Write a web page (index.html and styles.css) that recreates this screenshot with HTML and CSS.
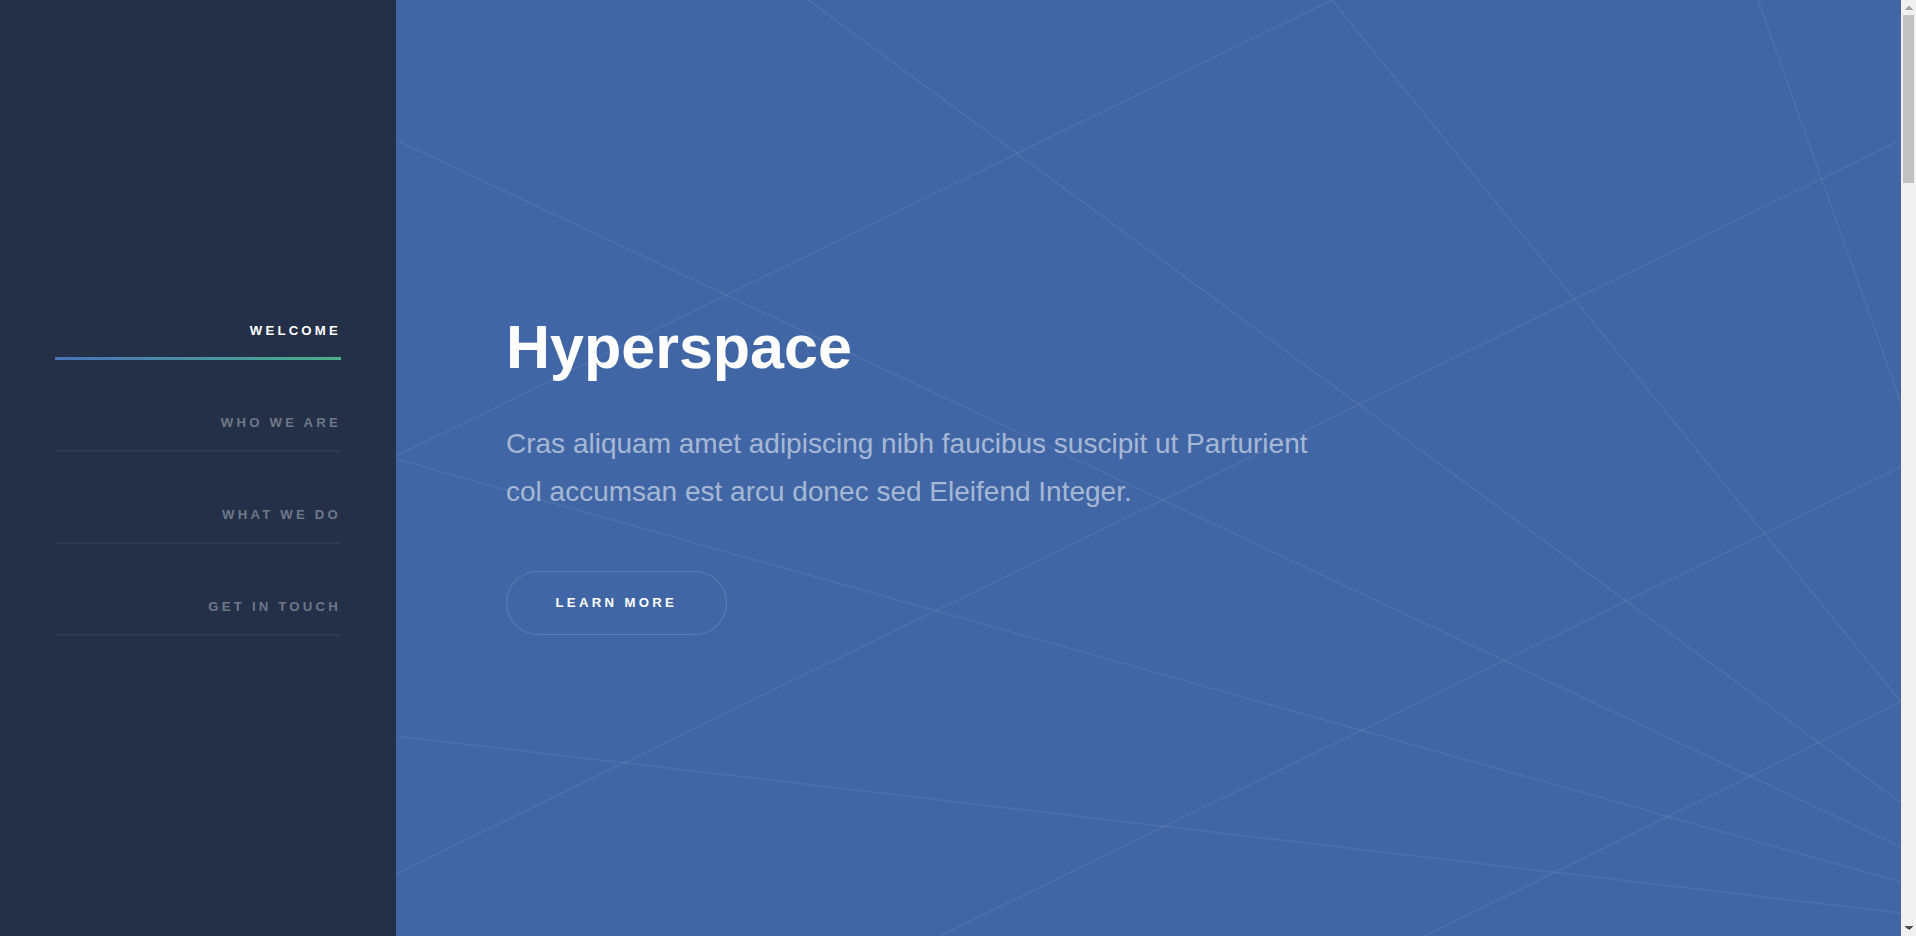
FILE: index.html
```html
<!DOCTYPE html>
<html lang="en">
<head>
<meta charset="utf-8">
<title>Hyperspace</title>
<link rel="stylesheet" href="styles.css">
</head>
<body>
<div class="page">
  <aside class="sidebar">
    <nav class="sidenav">
      <a href="#intro" class="sidenav-link is-active">Welcome</a>
      <a href="#one" class="sidenav-link">Who we are</a>
      <a href="#two" class="sidenav-link">What we do</a>
      <a href="#three" class="sidenav-link">Get in touch</a>
    </nav>
  </aside>

  <main class="main">
    <section id="intro" class="intro">
      <svg class="intro-lines" viewBox="0 0 1505 936" preserveAspectRatio="none" aria-hidden="true">
        <g fill="none" stroke="rgba(255,255,255,0.075)" stroke-width="1.5">
          <line x1="412" y1="0" x2="1505" y2="803"/>
          <line x1="936" y1="0" x2="1505" y2="702"/>
          <line x1="936" y1="0" x2="0" y2="456"/>
          <line x1="1362" y1="0" x2="1505" y2="403"/>
          <line x1="1505" y1="140" x2="0" y2="874"/>
          <line x1="1505" y1="467" x2="544" y2="936"/>
          <line x1="0" y1="140" x2="1505" y2="847"/>
          <line x1="0" y1="459" x2="1505" y2="882"/>
          <line x1="0" y1="736" x2="1505" y2="913"/>
          <line x1="1505" y1="702" x2="1029" y2="936"/>
        </g>
      </svg>
      <div class="intro-inner">
        <h1 class="intro-title">Hyperspace</h1>
        <p class="intro-text">Cras aliquam amet adipiscing nibh faucibus suscipit ut Parturient<br>col accumsan est arcu donec sed Eleifend Integer.</p>
        <a href="#one" class="button">Learn more</a>
      </div>
    </section>
  </main>

  <div class="scrollbar" aria-hidden="true">
    <span class="scrollbar-btn scrollbar-up"></span>
    <span class="scrollbar-thumb"></span>
    <span class="scrollbar-track"></span>
    <span class="scrollbar-btn scrollbar-down"></span>
  </div>
</div>
</body>
</html>
```

FILE: styles.css
```css
html, body {
  margin: 0;
  padding: 0;
  height: 100%;
}

body {
  background: #243048;
  font-family: "Liberation Sans", Arial, sans-serif;
  color: rgba(255, 255, 255, 0.55);
  overflow: hidden;
}

.page {
  display: flex;
  height: 100vh;
}

/* Sidebar */
.sidebar {
  flex: 0 0 396px;
  box-sizing: border-box;
  background: #243048;
  display: flex;
  flex-direction: column;
  justify-content: center;
  padding: 24px 55px 0;
}

.sidenav {
  display: flex;
  flex-direction: column;
  gap: 56.3px;
}

.sidenav-link {
  position: relative;
  display: block;
  padding-bottom: 20.5px;
  border-bottom: 2px solid rgba(255, 255, 255, 0.05);
  font-size: 13.2px;
  line-height: 1;
  font-weight: 700;
  letter-spacing: 3.2px;
  text-transform: uppercase;
  text-align: right;
  text-decoration: none;
  color: rgba(255, 255, 255, 0.35);
}

.sidenav-link.is-active {
  color: #ffffff;
}

.sidenav-link.is-active::after {
  content: "";
  position: absolute;
  left: 0;
  right: 0;
  bottom: -2.5px;
  height: 3px;
  background: linear-gradient(to right, #4a72b8, #4cb08a);
}

/* Main */
.main {
  flex: 1 1 auto;
  min-width: 0;
  display: flex;
  flex-direction: column;
}

.intro {
  position: relative;
  flex: 1 1 auto;
  box-sizing: border-box;
  background: #4166a5;
  display: flex;
  flex-direction: column;
  justify-content: center;
  padding: 12.6px 110px 0;
  overflow: hidden;
}

.intro-lines {
  position: absolute;
  left: 0;
  top: 0;
  width: 100%;
  height: 100%;
}

.intro-inner {
  position: relative;
  display: flex;
  flex-direction: column;
  align-items: flex-start;
}

.intro-title {
  margin: 0 0 39.7px;
  font-size: 61px;
  line-height: 66.5px;
  font-weight: 700;
  color: #ffffff;
}

.intro-text {
  margin: 0 0 55px;
  font-size: 28px;
  line-height: 48.1px;
  color: rgba(255, 255, 255, 0.55);
}

.button {
  display: inline-block;
  height: 64px;
  line-height: 64px;
  padding: 0 49.5px;
  border-radius: 32px;
  box-shadow: inset 0 0 0 1px rgba(255, 255, 255, 0.15);
  font-size: 13.2px;
  font-weight: 700;
  letter-spacing: 3.3px;
  text-transform: uppercase;
  text-decoration: none;
  color: #ffffff;
  white-space: nowrap;
}

/* Window scrollbar, as shown in the reference */
.scrollbar {
  flex: 0 0 15px;
  display: flex;
  flex-direction: column;
  background: #f1f1f1;
}

.scrollbar-btn {
  flex: 0 0 15px;
}

.scrollbar-up {
  background:
    linear-gradient(to bottom right, transparent 50%, #a3a3a3 50%) 3.5px 5.5px / 4px 4px no-repeat,
    linear-gradient(to bottom left, transparent 50%, #a3a3a3 50%) 7.5px 5.5px / 4px 4px no-repeat;
}

.scrollbar-down {
  background:
    linear-gradient(to top right, transparent 50%, #505050 50%) 3.5px 5px / 4px 4px no-repeat,
    linear-gradient(to top left, transparent 50%, #505050 50%) 7.5px 5px / 4px 4px no-repeat;
}

.scrollbar-thumb {
  flex: 0 0 168px;
  margin: 0 2px;
  background: #c1c1c1;
}

.scrollbar-track {
  flex: 1 1 auto;
}
```
